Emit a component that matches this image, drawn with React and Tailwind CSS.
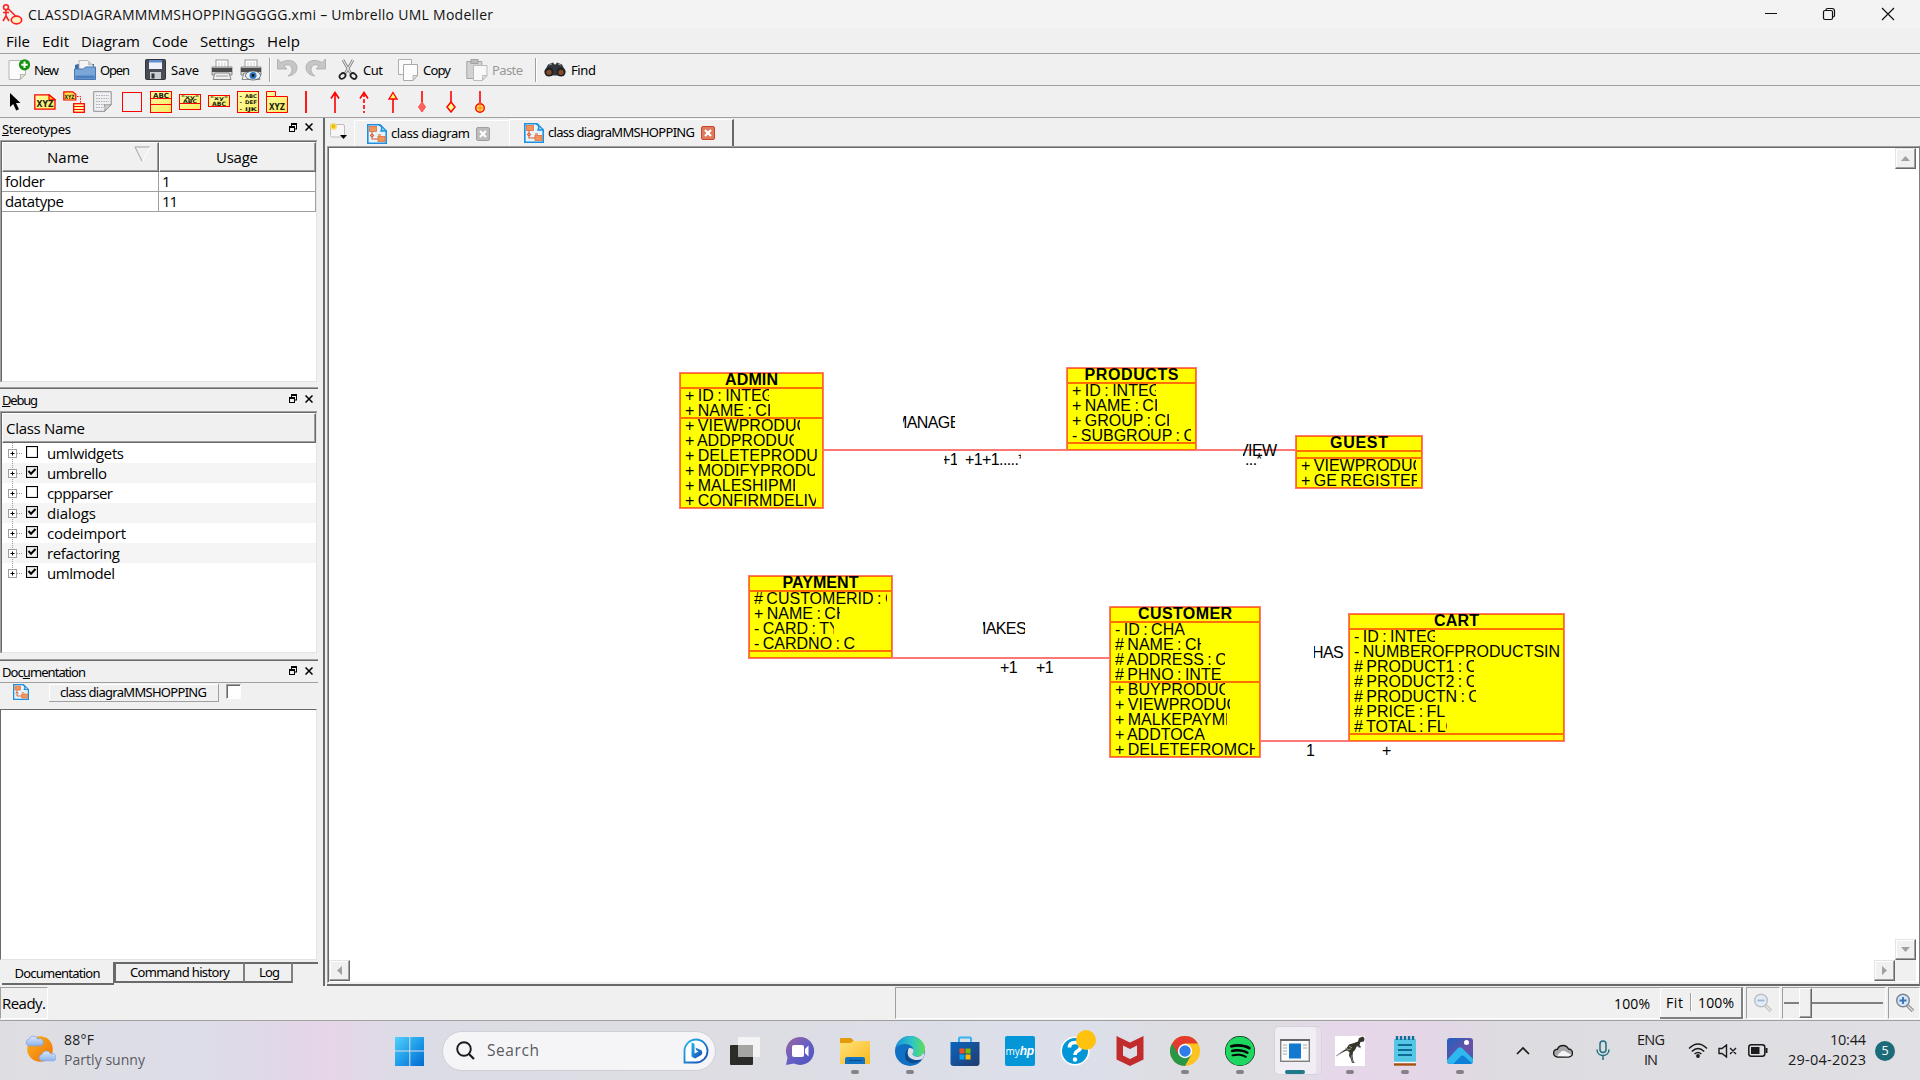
import React, { useLayoutEffect, useRef } from "react";
import { FaSpotify } from "react-icons/fa";

/* Text run spread evenly over a fixed width. */
function Fit({ w, className = "", children }) {
  const ref = useRef(null);
  useLayoutEffect(() => {
    const el = ref.current;
    el.style.letterSpacing = "0px";
    const n = el.textContent.length;
    const natural = el.getBoundingClientRect().width;
    if (n > 1) el.style.letterSpacing = (w - natural) / (n - 1) + "px";
  }, [w]);
  return (
    <span className={"block shrink-0 whitespace-nowrap " + className} style={{ width: w }}>
      <span ref={ref} className="inline-block whitespace-pre">{children}</span>
    </span>
  );
}

const Svg = ({ w, h, vb, className = "", children }) => (
  <svg width={w} height={h} viewBox={vb || `0 0 ${w} ${h}`} className={"block shrink-0 " + className} fill="none">{children}</svg>
);

/* ---------- title bar ---------- */
const AppIcon = () => (
  <Svg w={21} h={21}>
    <circle cx="4" cy="3.2" r="2.4" stroke="#f22" strokeWidth="1.6" />
    <path d="M4 6v6M1 8.5h6M4 12l-3 5M4 12l3 5M6 4.5l8 8" stroke="#f22" strokeWidth="1.6" />
    <ellipse cx="14.5" cy="16" rx="5.2" ry="3.8" fill="#fdf3c0" stroke="#f22" strokeWidth="1.7" />
  </Svg>
);

function TitleBar() {
  return (
    <div className="flex h-[28px] items-center bg-[#f3f3f3] pl-[2px]">
      <AppIcon />
      <Fit w={465} className="ml-[5px] text-[14px] text-[#111]">CLASSDIAGRAMMMMSHOPPINGGGGG.xmi – Umbrello UML Modeller</Fit>
      <div className="ml-auto flex items-center pr-[25px]">
        <Svg w={14} h={14} className="mr-[44px]"><path d="M1 6.500h12" stroke="#111" /></Svg>
        <Svg w={14} h={14} className="mr-[45px]">
          <rect x="1.500" y="3.500" width="9" height="9" rx="1.500" stroke="#111" strokeWidth="1.200" />
          <path d="M4 3.200C4 2 4.600 1.500 5.500 1.500H10c1.700 0 2.500.8 2.500 2.500v4.500c0 1-.5 1.500-1.600 1.500" stroke="#111" strokeWidth="1.200" />
        </Svg>
        <Svg w={14} h={14}><path d="M1 1l12 12M13 1L1 13" stroke="#111" strokeWidth="1.200" /></Svg>
      </div>
    </div>
  );
}

function MenuBar() {
  const items = [["File", 24, 6], ["Edit", 27, 12], ["Diagram", 59, 12], ["Code", 36, 12], ["Settings", 55, 12], ["Help", 33, 12]];
  return (
    <div className="flex h-[26px] items-center border-b border-[#a0a0a0]">
      {items.map(([t, w, m]) => (
        <div key={t} className="flex" style={{ marginLeft: m }}><Fit w={w} className="text-[15px] leading-[20px]">{t}</Fit></div>
      ))}
    </div>
  );
}

/* ---------- main toolbar ---------- */
const NewIcon = () => (
  <Svg w={22} h={22}>
    <path d="M1 1.500h16.500v14l-5.500 5H1z" fill="#fbfbfb" stroke="#b5b5b5" />
    <path d="M17.500 15.500l-5.500 5q1-2.500 .2-5z" fill="#dcecc8" stroke="#aaa" strokeWidth=".8" />
    <circle cx="16.500" cy="5.800" r="5.600" fill="#15930f" />
    <path d="M16.500 2.600v6.400M13.300 5.800h6.400" stroke="#fff" strokeWidth="2" />
  </Svg>
);
const OpenIcon = () => (
  <Svg w={22} h={22}>
    <path d="M1 10V6l3-1h16v8z" fill="#3c6aa5" />
    <path d="M5 12V1.500h9l5 5V12z" fill="#f4f4f6" stroke="#aaa" strokeWidth=".8" />
    <path d="M14 1.500l5 5h-5z" fill="#c8c8cc" />
    <path d="M.5 10h9l2-2h10v12.500H.5z" fill="#7ba6d8" stroke="#4878b4" />
    <path d="M1.500 18h19" stroke="#4d80c0" strokeWidth="3" />
  </Svg>
);
const SaveIcon = () => (
  <Svg w={21} h={21}>
    <rect x=".5" y=".5" width="20" height="20" rx="1" fill="#4a4c55" stroke="#33343b" />
    <rect x="4" y="1" width="13" height="9" fill="#eef2f8" />
    <rect x="4" y="1" width="13" height="2.500" fill="#5f8fd0" />
    <rect x="5" y="13" width="11" height="7" fill="#c9ccd2" />
    <rect x="6.500" y="14.500" width="3" height="5" fill="#34363c" />
  </Svg>
);
const Printer = ({ eye }) => (
  <Svg w={22} h={22}>
    <rect x="5" y="1" width="12" height="8" fill="#fff" stroke="#999" />
    <path d="M8 3v5M11 3v5M14 3v5" stroke="#ccc" />
    <path d="M1 8h20v8H1z" fill="#d0d0d0" stroke="#888" />
    <path d="M1 9h20v4H1z" fill="#4c4c4c" />
    <path d="M4 14h14l2 6.500H2z" fill="#eee" stroke="#888" />
    <path d="M5 17h12" stroke="#999" />
    {eye && <g><ellipse cx="13" cy="16.500" rx="7.500" ry="4.500" fill="#e8f2fb" stroke="#555" strokeWidth=".8" /><circle cx="13" cy="16.500" r="3.500" fill="#2f78c0" /><circle cx="13" cy="16.500" r="1.400" fill="#111" /></g>}
  </Svg>
);
const Undo = ({ flip }) => (
  <Svg w={22} h={20} className="mb-[3px]">
    <g transform={flip ? "translate(22 0) scale(-1 1)" : undefined}>
      <path d="M1.500 1v10h9.500l-3.200-3.200C12 5.500 16 7.500 16 11.500c0 3-2 5-4 6.500 5-.5 9-3.500 9-8.500C21 2.500 12 .5 5 4.500z" fill="#c6c6c6" stroke="#a9a9a9" strokeWidth=".8" />
    </g>
  </Svg>
);
const CutIcon = () => (
  <Svg w={20} h={21}>
    <path d="M5 1l7.500 13M15 1L7.500 14" stroke="#777" strokeWidth="2.600" />
    <path d="M5 1l7.500 13M15 1L7.500 14" stroke="#e4e4e4" strokeWidth="1.200" />
    <ellipse cx="4.500" cy="17" rx="3.200" ry="2.500" stroke="#222" strokeWidth="1.800" transform="rotate(-40 4.500 17)" />
    <ellipse cx="15.500" cy="17" rx="3.200" ry="2.500" stroke="#222" strokeWidth="1.800" transform="rotate(40 15.500 17)" />
  </Svg>
);
const CopyIcon = () => (
  <Svg w={20} h={22}>
    <path d="M.5.5h13v15H.5z" fill="#fafafa" stroke="#b0b0b0" />
    <path d="M5.500 5.500h14v11l-4.500 5H5.500z" fill="#fcfcfc" stroke="#a8a8a8" />
    <path d="M19.500 16.500l-4.500 5v-5z" fill="#ddd" stroke="#a8a8a8" strokeWidth=".8" />
  </Svg>
);
const PasteIcon = () => (
  <Svg w={22} h={22}>
    <path d="M.8 2.500h15v17H.8z" fill="#d2d2d2" stroke="#a5a5a5" />
    <rect x="5" y=".5" width="7" height="4" fill="#bbb" stroke="#999" strokeWidth=".8" />
    <path d="M7.500 6.500h13.500v10l-4.500 5h-9z" fill="#f8f8f8" stroke="#bbb" />
    <path d="M21 16.500l-4.500 5v-5z" fill="#ddd" stroke="#b5b5b5" strokeWidth=".8" />
  </Svg>
);
const FindIcon = () => (
  <Svg w={22} h={15}>
    <path d="M4 2.500l5-2 1.500 2h1l1.500-2 5 2 3.500 7-6 4h-9l-6-4z" fill="#33363a" />
    <circle cx="5" cy="10" r="4.600" fill="#1f2225" /><circle cx="17" cy="10" r="4.600" fill="#1f2225" />
    <circle cx="5" cy="10.300" r="2.600" fill="#8a4b28" /><circle cx="17" cy="10.300" r="2.600" fill="#8a4b28" />
    <path d="M5 3l3-1M14 2l3 1" stroke="#8d949b" />
  </Svg>
);
const Sep = () => <div className="h-[24px] w-[2px] shrink-0 border-l border-[#a0a0a0] bg-white" />;
const Label = ({ w, children, dim }) => (
  <Fit w={w} className={"pt-[2px] font-['Noto_Sans'] text-[13px] " + (dim ? "text-[#999]" : "")}>{children}</Fit>
);

function MainToolbar() {
  return (
    <div className="flex h-[32px] items-center border-b border-[#a0a0a0] pl-[8px]">
      <div className="flex w-[66px] items-center gap-[4px]"><NewIcon /><Label w={25}>New</Label></div>
      <div className="flex w-[71px] items-center gap-[4px]"><OpenIcon /><Label w={30}>Open</Label></div>
      <div className="flex w-[66px] items-center gap-[5px]"><SaveIcon /><Label w={28}>Save</Label></div>
      <div className="flex w-[58px] items-center gap-[7px]"><Printer /><Printer eye /></div>
      <Sep />
      <div className="ml-[5px] flex w-[62px] items-center gap-[7px]"><Undo /><Undo flip /></div>
      <div className="flex w-[60px] items-center gap-[5px]"><CutIcon /><Label w={20}>Cut</Label></div>
      <div className="flex w-[68px] items-center gap-[5px]"><CopyIcon /><Label w={28}>Copy</Label></div>
      <div className="flex w-[69px] items-center gap-[4px]"><PasteIcon /><Label w={31} dim>Paste</Label></div>
      <Sep />
      <div className="ml-[7px] flex items-center gap-[5px]"><FindIcon /><Label w={25}>Find</Label></div>
    </div>
  );
}

/* ---------- drawing toolbar ---------- */
const Glyph = ({ x, y, s = 8, children, w }) => (
  <text x={x} y={y} fontSize={s} fontFamily="DejaVu Sans" fontWeight="700" fill="#221" textLength={w} lengthAdjust="spacingAndGlyphs">{children}</text>
);
const Grad = () => (
  <defs><linearGradient id="yl" x1="0" y1="0" x2="1" y2="1"><stop offset="0" stopColor="#ffffa8" /><stop offset="1" stopColor="#f6ea5c" /></linearGradient></defs>
);
const DrawTools = [
  <Svg w={13} h={19}><path d="M1 1v14l3.200-3 3 6.500 2.800-1.300-3-6.200h4.500z" fill="#000" /></Svg>,
  <Svg w={22} h={16}><Grad /><path d="M.8.8H15l6 5v9.400H.8z" fill="url(#yl)" stroke="red" strokeWidth="1.300" /><path d="M15 .8v5h6z" fill="#fc0" stroke="red" strokeWidth="1.200" /><Glyph x="2.500" y="13" w="17">XYZ</Glyph></Svg>,
  <Svg w={22} h={22}><path d="M.8.8h9l3 2.500V9h-12z" fill="#ffe24a" stroke="red" strokeWidth="1.200" /><Glyph x="1.500" y="8" s={6} w="10">XYZ</Glyph><path d="M14 5.500h3.500V12" stroke="red" strokeDasharray="1.500 1.200" /><rect x="10.700" y="12.700" width="10.600" height="8.600" fill="#ffffa0" stroke="red" strokeWidth="1.300" /><path d="M10.700 15.500h10.600M10.700 18.500h10.600" stroke="red" /></Svg>,
  <Svg w={19} h={21}><path d="M.7.7h17.500v13l-6.500 6.600H.7z" fill="#f0f0f1" stroke="#8f8f94" /><path d="M3 4.500h13M3 7.500h13M3 10.500h13M3 13.500h9M3 16.500h8" stroke="#a9adba" strokeDasharray="1.500 1" /><path d="M18.200 13.700l-6.500 6.600q1-4-.5-6.500z" fill="#cfcfd2" stroke="#888" strokeWidth=".8" /></Svg>,
  <Svg w={20} h={20}><rect x=".5" y=".5" width="19" height="19" stroke="red" strokeWidth="1" /></Svg>,
  <Svg w={22} h={22}><Grad /><rect x=".5" y=".5" width="21" height="21" fill="url(#yl)" stroke="red" /><path d="M1 7.500h20M1 13.500h20" stroke="red" /><Glyph x="3" y="6.700" s={7} w="16">ABC</Glyph></Svg>,
  <Svg w={22} h={16}><Grad /><rect x=".5" y=".5" width="21" height="15" fill="url(#yl)" stroke="red" /><path d="M1 9.500h20" stroke="red" /><Glyph x="2" y="5" s={5} w="18">"xy"</Glyph><Glyph x="4" y="8.800" s={5} w="14">ABC</Glyph></Svg>,
  <Svg w={22} h={12} className="-mt-[1px]"><Grad /><rect x=".5" y=".5" width="21" height="11" fill="url(#yl)" stroke="red" /><Glyph x="2" y="5" s={5} w="18">"xy"</Glyph><Glyph x="4" y="10.500" s={6} w="14">ABC</Glyph></Svg>,
  <Svg w={22} h={22}><Grad /><rect x=".5" y=".5" width="21" height="21" fill="url(#yl)" stroke="red" /><Glyph x="2.500" y="6.500" s={5} w="2.500">-</Glyph><Glyph x="8" y="6.500" s={5} w="12">ABC</Glyph><Glyph x="2.500" y="13" s={5} w="2.500">-</Glyph><Glyph x="8" y="13" s={5} w="12">DEF</Glyph><Glyph x="2.500" y="19.500" s={5} w="2.500">-</Glyph><Glyph x="8" y="19.500" s={5} w="12">IJK</Glyph></Svg>,
  <Svg w={22} h={22}><Grad /><path d="M.5.500h9v5H21.500v16H.5z" fill="url(#yl)" stroke="red" /><path d="M.5 5.500h9" stroke="red" /><Glyph x="3" y="18.500" w="16">XYZ</Glyph></Svg>,
  <Svg w={12} h={22}><path d="M6 0v22" stroke="red" strokeWidth="1.800" /></Svg>,
  <Svg w={12} h={22}><path d="M6 1v21M2 7.500L6 1.500l4 6" stroke="red" strokeWidth="1.600" /></Svg>,
  <Svg w={12} h={22}><path d="M2 7.500L6 1.500l4 6" stroke="red" strokeWidth="1.600" /><path d="M6 2v20" stroke="red" strokeWidth="1.600" strokeDasharray="4 2" /></Svg>,
  <Svg w={12} h={22}><path d="M6 8v14" stroke="red" strokeWidth="1.600" /><path d="M6 1.500l4 6.500H2z" fill="#ffff60" stroke="red" strokeWidth="1.300" /></Svg>,
  <Svg w={12} h={22}><path d="M6 0v11" stroke="red" strokeWidth="1.600" /><path d="M6 11l3.500 5L6 21l-3.500-5z" fill="#ff6060" stroke="#ff4d4d" /></Svg>,
  <Svg w={12} h={22}><path d="M6 0v11" stroke="red" strokeWidth="1.600" /><path d="M6 11l4 5-4 5-4-5z" fill="#ffff90" stroke="red" strokeWidth="1.500" /></Svg>,
  <Svg w={12} h={22}><path d="M6 0v12" stroke="red" strokeWidth="1.600" /><circle cx="6" cy="17" r="4.300" fill="#ffd94a" stroke="red" strokeWidth="1.400" /><path d="M6 12v9M1.500 17h9" stroke="#ff7a1a" strokeWidth=".9" /></Svg>,
];
function DrawToolbar() {
  return (
    <div className="flex h-[32px] items-center border-b border-[#a0a0a0] pl-[1px]">
      {DrawTools.map((icon, i) => (
        <div key={i} className="flex w-[29px] shrink-0 justify-center">{icon}</div>
      ))}
    </div>
  );
}

/* ---------- docks ---------- */
const DockButtons = () => (
  <div className="ml-auto mb-[4px] flex items-center gap-[8px] pr-[5px]">
    <Svg w={8} h={9}><path d="M2.500 0v4M7.500 0v6M5 6h3" stroke="#000" /><path d="M2 1h6" stroke="#000" strokeWidth="2" /><rect x=".5" y="3.500" width="5" height="5" fill="#f0f0f0" stroke="#000" /><path d="M0 4h6" stroke="#000" strokeWidth="2" /></Svg>
    <Svg w={8} h={8}><path d="M.5.5l7 7M7.500.5l-7 7" stroke="#000" strokeWidth="1.500" /></Svg>
  </div>
);
const DockTitle = ({ w, className, children }) => (
  <div className={"flex items-center pl-[2px] " + className}>
    <Fit w={w} className="pt-[1px] font-['Noto_Sans'] text-[13px]">{children}</Fit>
    <DockButtons />
  </div>
);
const Sunken = ({ className = "", children }) => (
  <div className={"mr-[1px] flex flex-col border-t border-l border-[#a0a0a0] " + className}>
    <div className="flex min-h-0 flex-1 flex-col border border-t-[#696969] border-r-[#e3e3e3] border-b-[#e3e3e3] border-l-[#696969] bg-white">{children}</div>
  </div>
);
const Divider = () => <div className="h-[2px] shrink-0 border-t border-[#a0a0a0] bg-[#696969]" />;
const headCell = "border-t border-l border-t-white border-l-white border-r border-b border-r-[#696969] border-b-[#696969] bg-[#f0f0f0] shadow-[inset_-1px_-1px_0_#a0a0a0]";

function Stereotypes() {
  return (
    <>
      <DockTitle w={69} className="h-[22px]"><u>S</u>tereotypes</DockTitle>
      <Sunken className="h-[242px]">
        <div className="flex h-[30px]">
          <div className={"flex w-[157px] items-center pl-[44px] " + headCell}>
            <Fit w={42} className="text-[15px]">Name</Fit>
            <Svg w={17} h={17} className="mb-[5px] ml-[45px]"><path d="M16 1H1l7.500 15" stroke="#a0a0a0" /><path d="M16 1L8.500 16" stroke="#fff" /></Svg>
          </div>
          <div className={"flex flex-1 items-center justify-center pr-px " + headCell}><Fit w={42} className="text-[15px]">Usage</Fit></div>
        </div>
        {[["folder", 40, "1", 7], ["datatype", 59, "11", 16]].map(([a, w, b, v]) => (
          <div key={a} className="flex h-[20px] border-b border-[#a0a0a0] text-[15px] leading-[19px]">
            <div className="w-[157px] border-r border-[#a0a0a0] pl-[3px]"><Fit w={w}>{a}</Fit></div>
            <div className="flex-1 border-r border-[#a0a0a0] pl-[3px]"><Fit w={v}>{b}</Fit></div>
          </div>
        ))}
      </Sunken>
    </>
  );
}

const Check = ({ on }) => (
  <Svg w={12} h={12}>
    <rect x=".5" y=".5" width="11" height="11" fill={on ? "#f0f0f0" : "#fff"} stroke="#000" strokeWidth="1.200" />
    {on && <path d="M2.500 5l2.500 2.800L9.500 3" stroke="#000" strokeWidth="2" />}
  </Svg>
);
function DebugDock() {
  const rows = [["umlwidgets", 0, 77], ["umbrello", 1, 60], ["cppparser", 0, 66], ["dialogs", 1, 49], ["codeimport", 1, 79], ["refactoring", 1, 73], ["umlmodel", 1, 68]];
  return (
    <>
      <DockTitle w={36} className="h-[22px] pt-[1px]"><u>D</u>ebug</DockTitle>
      <Sunken className="h-[242px]">
        <div className={"flex h-[30px] items-center pl-[3px] " + headCell}><Fit w={79} className="text-[15px]">Class Name</Fit></div>
        {rows.map(([t, on, w], i) => (
          <div key={t} className={"flex h-[20px] items-center pl-[6px] " + (i % 2 ? "bg-[#f5f5f5]" : "")}>
            <Svg w={15} h={20}>
              <path d={i === 6 ? "M4.500 0v10" : "M4.500 0v20"} stroke="#999" strokeDasharray="1 1" />
              <path d="M9 10.500h6" stroke="#999" strokeDasharray="1 1" />
              <rect x=".5" y="6.500" width="8" height="8" fill="#fff" stroke="#a0a0a0" />
              <path d="M2.500 10.500h4M4.500 8.500v4" stroke="#000" />
            </Svg>
            <div className="mb-[3px] ml-[3px]"><Check on={on} /></div>
            <Fit w={w} className="ml-[9px] text-[15px] leading-[18px]">{t}</Fit>
          </div>
        ))}
      </Sunken>
    </>
  );
}

const DiagramIcon = ({ s = 20 }) => (
  <Svg w={s} h={s} vb="0 0 20 20">
    <path d="M.8.8H13l6.200 6v12.400H.8z" fill="#e4f3fc" stroke="#1e8fe0" strokeWidth="1.600" />
    <path d="M12 1q4 1 2 6h5" fill="#8fd0f5" stroke="#1e8fe0" strokeWidth="1.300" />
    <rect x="2.500" y="2.500" width="7" height="5" fill="#f2955c" stroke="#e07038" strokeWidth=".8" />
    <rect x="11" y="12.500" width="7" height="5" fill="#f2955c" stroke="#e07038" strokeWidth=".8" />
    <path d="M5 7.500v2.500M5 13v2h6M3.500 11.500L5 10l1.500 1.500L5 13z" stroke="#e05a2b" strokeWidth="1.100" />
    <path d="M11 11h3" stroke="#e9a27a" strokeWidth="2" />
  </Svg>
);

function DocumentationDock() {
  return (
    <>
      <DockTitle w={84} className="h-[22px] border-b border-[#a0a0a0] pt-[2px]">Doc<u>u</u>mentation</DockTitle>
      <div className="flex h-[26px] items-start pl-[13px] pt-[1px]">
        <DiagramIcon s={16} />
        <div className="ml-[20px] flex h-[18px] w-[170px] items-center justify-center border-r border-b border-[#a0a0a0] shadow-[inset_1px_1px_0_#fff]">
          <Fit w={147} className="font-['Noto_Sans'] text-[13px]">class diagraMMSHOPPING</Fit>
        </div>
        <div className="ml-[7px] h-[15px] w-[15px] border border-t-[#a0a0a0] border-r-white border-b-white border-l-[#a0a0a0] bg-white shadow-[inset_1px_1px_0_#696969]" />
      </div>
      <div className="mr-[1px] h-[251px] border border-t-[#696969] border-r-[#e3e3e3] border-b-[#e3e3e3] border-l-[#696969] bg-white" />
      <div className="mt-[2px] flex h-[24px] items-start font-['Noto_Sans'] text-[13px]">
        <div className="ml-[2px] flex h-[23px] w-[112px] items-center justify-center border-r border-b-2 border-[#696969] pt-[2px]"><Fit w={86}>Documentation</Fit></div>
        <div className="flex h-[21px] w-[131px] items-center justify-center border-2 border-[#696969] border-r-[#808080] bg-[#f0f0f0] pl-px"><Fit w={100}>Command history</Fit></div>
        <div className="flex h-[21px] w-[48px] items-center justify-center border-2 border-l-0 border-[#696969] border-r-[#808080] pl-[3px]"><Fit w={21}>Log</Fit></div>
        <div className="h-[2px] flex-1 bg-[#696969]" />
      </div>
    </>
  );
}

/* ---------- canvas ---------- */
const CLASSES = [
  { name: "ADMIN", hw: 53, x: 679, y: 372, w: 145, attrs: [["+ ID : INTEG", 84], ["+ NAME : CH", 85]], ops: [["+ VIEWPRODUC", 115], ["+ ADDPRODUC", 109], ["+ DELETEPRODU", 133], ["+ MODIFYPRODU", 130], ["+ MALESHIPME", 110], ["+ CONFIRMDELIV", 131]] },
  { name: "PRODUCTS", hw: 94, x: 1066, y: 367, w: 131, attrs: [["+ ID : INTEG", 84], ["+ NAME : CH", 85], ["+ GROUP : CH", 97], ["- SUBGROUP : C", 119]], ops: [] },
  { name: "GUEST", hw: 58, x: 1295, y: 435, w: 128, attrs: [], ops: [["+ VIEWPRODUC", 115], ["+ GE REGISTER", 116]] },
  { name: "PAYMENT", hw: 76, x: 748, y: 575, w: 145, attrs: [["# CUSTOMERID : C", 133], ["+ NAME : CH", 86], ["- CARD : TY", 80], ["- CARDNO : C", 102]], ops: [] },
  { name: "CUSTOMER", hw: 94, x: 1109, y: 606, w: 152, attrs: [["- ID : CHA", 70], ["# NAME : CH", 86], ["# ADDRESS : C", 110], ["# PHNO : INTE", 106]], ops: [["+ BUYPRODUC", 110], ["+ VIEWPRODUC", 115], ["+ MALKEPAYME", 112], ["+ ADDTOCA", 90], ["+ DELETEFROMCH", 140]] },
  { name: "CART", hw: 45, x: 1348, y: 613, w: 217, attrs: [["- ID : INTEG", 81], ["- NUMBEROFPRODUCTSIN", 206], ["# PRODUCT1 : C", 120], ["# PRODUCT2 : C", 120], ["# PRODUCTN : C", 122], ["# PRICE : FL", 92], ["# TOTAL : FLO", 93]], ops: [] },
];
const Row = ({ t, w }) => (
  <div className="h-[15px] overflow-hidden whitespace-pre text-[16px] leading-[15px] [word-spacing:-1px]" style={{ width: w }}>{t}</div>
);
function UmlClass({ c }) {
  return (
    <div className="absolute border border-[#ff7878]" style={{ left: c.x - 329, top: c.y - 148, width: c.w }}>
      <div className="border border-[#ff7000] bg-[#ffff00]">
        <div className="flex h-[13px] items-center justify-center"><Fit w={c.hw} className="-mt-[2px] text-[16px] font-bold leading-[15px]">{c.name}</Fit></div>
        {[c.attrs, c.ops].map((rows, i) => (
          <div key={i} className="border-t-2 border-[#ff7000] pl-[4px]" style={{ height: rows.length ? rows.length * 15 : 7 }}>
            <div className="-mt-px">{rows.map(([t, w]) => <Row key={t} t={t} w={w} />)}</div>
          </div>
        ))}
      </div>
    </div>
  );
}
/* Free text; shift moves the run left inside its clip window. */
const Note = ({ x, y, w, shift = 0, children }) => (
  <div className="absolute h-[16px] overflow-hidden whitespace-pre text-[16px] leading-[16px] tracking-[-0.6px]" style={{ left: x - 329, top: y - 8 - 148, width: w }}>
    <span className="inline-block" style={{ marginLeft: -shift }}>{children}</span>
  </div>
);
const Wire = ({ x, y, w }) => <div className="absolute h-[2px] bg-[#ff7878]" style={{ left: x - 329, top: y - 148, width: w }} />;

const ScrollBtn = ({ d, className }) => (
  <div className={"absolute flex h-[21px] w-[21px] items-center justify-center border border-t-[#e3e3e3] border-r-[#696969] border-b-[#696969] border-l-[#e3e3e3] bg-[#f0f0f0] shadow-[inset_-1px_-1px_0_#a0a0a0,inset_1px_1px_0_#fff] " + className}>
    <Svg w={9} h={9} className="mb-px mr-px"><path d={d} fill="#a0a0a0" /></Svg>
  </div>
);

function Canvas() {
  return (
    <div className="relative min-h-0 flex-1 overflow-hidden bg-white font-['Liberation_Sans'] text-black">
      <Wire x={824} y={449} w={242} />
      <Wire x={1197} y={449} w={98} />
      <Wire x={893} y={657} w={216} />
      <Wire x={1261} y={740} w={87} />
      {CLASSES.map((c) => <UmlClass key={c.name} c={c} />)}
      <Note x={903} y={423} w={52} shift={9}>MANAGE</Note>
      <Note x={944} y={460} w={13} shift={3}>+1</Note>
      <Note x={965} y={460} w={56}>+1+1.....*</Note>
      <Note x={1243} y={451} w={35} shift={5}>VIEW</Note>
      <Note x={1256} y={460} w={8}>*</Note>
      <Note x={1245} y={460} w={12}>...</Note>
      <Note x={983} y={629} w={42} shift={10}>MAKES</Note>
      <Note x={1000} y={668} w={20}>+1</Note>
      <Note x={1036} y={668} w={20}>+1</Note>
      <Note x={1314} y={653} w={32} shift={2}>HAS</Note>
      <Note x={1306} y={751} w={12}>1</Note>
      <Note x={1382} y={751} w={12}>+</Note>
      <ScrollBtn d="M0 7l4.500-5L9 7z" className="right-[3px] top-0" />
      <ScrollBtn d="M0 2l4.500 5L9 2z" className="bottom-[22px] right-[3px]" />
      <ScrollBtn d="M2 0v9l5-4.500z" className="bottom-[1px] right-[24px]" />
      <ScrollBtn d="M7 0v9L2 4.500z" className="bottom-[1px] left-0" />
      <div className="absolute bottom-[1px] right-[3px] h-[21px] w-[21px] bg-[#f0f0f0]" />
    </div>
  );
}

const CloseBtn = ({ on }) => (
  <Svg w={14} h={14}>
    <rect x=".5" y=".5" width="13" height="13" rx="1.500" fill={on ? "#e07a5c" : "#bcbcbc"} stroke={on ? "#c8452a" : "#a0a0a0"} />
    <path d="M4 4l6 6M10 4l-6 6" stroke="#fff" strokeWidth="2.200" />
  </Svg>
);
function MainArea() {
  return (
    <div className="flex min-w-0 flex-1 flex-col border-l-2 border-[#696969]">
      <div className="flex h-[28px] items-end pl-[4px]">
        <Svg w={19} h={18} className="mb-[6px]">
          <rect x="1.500" y="2.500" width="14" height="12.500" rx="1.500" fill="#f7f7f7" stroke="#bdbdbd" />
          <circle cx="4.500" cy="4.500" r="3.600" fill="#f6d548" opacity=".75" /><circle cx="4.500" cy="4.500" r="1.800" fill="#f0b800" />
          <path d="M11 13h7l-3.500 4z" fill="#000" />
        </Svg>
        <div className="ml-[6px] flex h-[26px] w-[155px] items-center rounded-tl-[2px] border-t border-l border-white pl-[12px]">
          <DiagramIcon />
          <Fit w={79} className="ml-[4px] pt-px font-['Noto_Sans'] text-[13px]">class diagram</Fit>
          <div className="ml-[6px]"><CloseBtn /></div>
        </div>
        <div className="flex h-[27px] w-[225px] items-center border-t border-r-2 border-l border-t-white border-r-[#696969] border-l-white pl-[14px] pb-px">
          <DiagramIcon />
          <Fit w={147} className="ml-[4px] pt-px font-['Noto_Sans'] text-[13px]">class diagraMMSHOPPING</Fit>
          <div className="ml-[6px]"><CloseBtn on /></div>
        </div>
      </div>
      <div className="ml-[2px] flex min-h-0 flex-1 flex-col border-r border-b-2 border-r-[#808080] border-b-[#696969]">
        <div className="flex min-h-0 flex-1 flex-col border-b-2 border-t border-l border-t-[#a0a0a0] border-l-[#a0a0a0] border-b-[#f0f0f0]">
          <div className="flex min-h-0 flex-1 flex-col border-t border-l border-[#696969]">
            <Canvas />
          </div>
        </div>
      </div>
    </div>
  );
}

/* ---------- status bar ---------- */
const well = "border border-t-[#a0a0a0] border-r-white border-b-white border-l-[#a0a0a0]";
const Magnifier = ({ plus }) => (
  <Svg w={20} h={20} className={plus ? "" : "opacity-45"}>
    <path d="M12 12l6 6" stroke="#8a8a8a" strokeWidth="3.400" /><path d="M12.500 12.500l5.500 5.500" stroke="#ddd" strokeWidth="1.400" />
    <circle cx="8" cy="7.500" r="6.300" fill="#d4e6fa" stroke="#7c8794" strokeWidth="1.500" />
    <path d={plus ? "M4.500 7.500h7M8 4v7" : "M4.500 7.500h7"} stroke="#3a6fb8" strokeWidth="1.800" />
  </Svg>
);
function StatusBar() {
  return (
    <div className="flex h-[35px] items-start border-b border-[#a0a0a0] pt-[1px] text-[15px]">
      <div className={"flex h-[32px] w-[48px] items-center pl-[1px] " + well}><Fit w={44}>Ready.</Fit></div>
      <div className={"ml-[847px] flex h-[32px] w-[849px] items-center " + well}>
        <Fit w={36} className="ml-auto text-[14px]">100%</Fit>
        <div className="ml-[10px] flex h-[31px] w-[83px] items-center border-r-2 border-b-2 border-[#808080] pl-[6px] text-[14px] shadow-[inset_1px_1px_0_#fff]">
          <Fit w={17}>Fit</Fit>
          <div className="ml-[7px] h-[18px] w-[2px] border-l border-[#a0a0a0] bg-white" />
          <Fit w={36} className="ml-[6px]">100%</Fit>
        </div>
      </div>
      <div className={"ml-[2px] flex h-[32px] w-[34px] items-center justify-center " + well}><Magnifier /></div>
      <div className={"ml-[2px] flex h-[32px] w-[104px] items-center " + well}>
        <div className="ml-[1px] h-[2px] w-[15px] bg-[#808080]" />
        <div className="h-[30px] w-[13px] border border-t-white border-r-[#696969] border-b-[#696969] border-l-white bg-[#f0f0f0] shadow-[inset_-1px_-1px_0_#a0a0a0]" />
        <div className="h-[2px] w-[71px] bg-[#808080]" />
      </div>
      <div className={"ml-[2px] flex h-[32px] flex-1 items-center pl-[6px] " + well}><Magnifier plus /></div>
    </div>
  );
}

/* ---------- taskbar ---------- */
const cloudPath = "M3 9a3 3 0 0 1 .5-5.800A4 4 0 0 1 11 3a3 3 0 0 1 3 6z";
const Weather = () => (
  <Svg w={31} h={29}>
    <defs><linearGradient id="sun" x1="0" y1="0" x2="1" y2="1"><stop stopColor="#f8b420" /><stop offset="1" stopColor="#f07008" /></linearGradient><linearGradient id="cl" x1="0" y1="0" x2="0" y2="1"><stop stopColor="#dbe8fc" /><stop offset="1" stopColor="#8db2ee" /></linearGradient></defs>
    <circle cx="15" cy="15" r="12.800" fill="url(#sun)" />
    <g fill="url(#cl)" stroke="#7fa0dc" strokeWidth=".6"><path transform="translate(0 1.500) scale(1.150)" d={cloudPath} /><path transform="translate(13 16.500) scale(1.150)" d={cloudPath} /></g>
  </Svg>
);
const Windows = () => (
  <Svg w={30} h={30}>
    <defs><linearGradient id="win" gradientUnits="userSpaceOnUse" x1="0" y1="0" x2="30" y2="30"><stop stopColor="#55d3fc" /><stop offset=".5" stopColor="#1f9eea" /><stop offset="1" stopColor="#0068d0" /></linearGradient></defs>
    <path d="M0 1h14.300v13.500H0zM15.300 1H29v13.500H15.300zM0 15.500h14.300V30H0zM15.300 15.500H29V30H15.300z" fill="url(#win)" />
  </Svg>
);
const Bing = () => (
  <Svg w={26} h={26}>
    <defs><linearGradient id="bg" x1="0" y1="0" x2="1" y2="1"><stop stopColor="#23b8f0" /><stop offset="1" stopColor="#1649b0" /></linearGradient></defs>
    <path d="M1.500 24.500V13A11.500 11.500 0 1 1 13 24.500z" fill="#fff" stroke="url(#bg)" strokeWidth="1.800" />
    <path d="M8.500 4.500l3 1.300v9.700l4-2-2-1-1.200-3 6.200 2.700c1.500 2.500.5 4.300-1 5.300l-5.500 3-3.500-2z" fill="url(#bg)" />
  </Svg>
);
const TaskIcons = [
  [<Svg w={30} h={28}><rect x="0" y="8" width="23" height="20" rx="1" fill="#2b2b29" /><rect x="8" y="0" width="22" height="20" rx="1" fill="#f4f4f4" /><path d="M8 8h15v12H8z" fill="#a5a5a3" /></Svg>],
  [<Svg w={30} h={30}><defs><linearGradient id="chat" x1="0" y1="0" x2="1" y2="1"><stop stopColor="#a1649c" /><stop offset=".5" stopColor="#6560c4" /><stop offset="1" stopColor="#4a52c0" /></linearGradient></defs><path d="M15 1a14 14 0 1 1-6 26.600L1 29l1.500-7.500A14 14 0 0 1 15 1z" fill="url(#chat)" /><rect x="7" y="9" width="12" height="12" rx="2" fill="#fff" /><path d="M20 13l3.500-3.500v11L20 17z" fill="#fff" /></Svg>],
  [<Svg w={30} h={28}><defs><linearGradient id="fo" x1="0" y1="0" x2="1" y2="1"><stop stopColor="#ffe17a" /><stop offset="1" stopColor="#fbba1c" /></linearGradient></defs><path d="M0 2q0-1 1-1h10l3 3v5H0z" fill="#e29c09" /><path d="M0 6h11l2-2h16q1 0 1 1v22H0z" fill="url(#fo)" /><path d="M5 27v-5q0-2 2-2h16q2 0 2 2v5z" fill="#1273c4" /><path d="M9 23.500h13" stroke="#0b4d91" strokeWidth="1.200" /></Svg>, 1],
  [<Svg w={30} h={30}><defs><linearGradient id="e1" x1="0" y1="0" x2="1" y2="0"><stop stopColor="#1993d8" /><stop offset=".55" stopColor="#2fc4c8" /><stop offset="1" stopColor="#5fe055" /></linearGradient></defs><circle cx="15" cy="15" r="15" fill="#1070c4" /><path d="M.5 12C2 5 8 0 15 0c9 0 15 6.500 15 13 0 4.500-3.500 7.500-8 7.500-3 0-5-1-5-2.500 0-1 1.500-1.500 1.500-4 0-3-3.500-6-8-6-5 0-9 2.500-10 4z" fill="url(#e1)" /><path d="M10 20c0 5 5 8 10 7 4-.8 6-2.500 8-5-5 3-14 2-15.500-4-.5-2.500.5-5 2.500-6-3 0-5 4-5 8z" fill="#0b4a92" /><path d="M14 12c3 0 5 1 4.500 3.500-.5 1.500-1.500 2-1 3 .8 2 5 3 8 1.500l4-3.500c0 3-1 5-2 6.500-5 2-13 1-14.500-4-.8-3 .2-6 1-7z" fill="#dddde5" /></Svg>, 1],
  [<Svg w={30} h={30}><defs><linearGradient id="st" x1="0" y1="0" x2="1" y2="1"><stop stopColor="#0a66c0" /><stop offset="1" stopColor="#243a6e" /></linearGradient></defs><path d="M9 7V2.500q0-1 1-1h10q1 0 1 1V7" stroke="#35b4ef" strokeWidth="2" /><path d="M.5 6h29v21q0 3-3 3h-23q-3 0-3-3z" fill="url(#st)" /><path d="M9.500 12.500h5v5h-5z" fill="#f25022" /><path d="M15.500 12.500h5v5h-5z" fill="#7fba00" /><path d="M9.500 18.500h5v5h-5z" fill="#00a4ef" /><path d="M15.500 18.500h5v5h-5z" fill="#ffb900" /></Svg>],
  [<div className="flex h-[30px] w-[30px] items-center justify-center rounded-[2px] bg-[#0496d6] text-white"><span className="text-[10px] leading-none">my</span><span className="font-['Liberation_Sans_Narrow','Liberation_Sans'] text-[12px] font-bold italic leading-none tracking-[-0.5px]">hp</span></div>],
  [<div className="relative h-[30px] w-[30px]"><Svg w={30} h={30}><circle cx="15" cy="15" r="13.800" fill="#0496d6" stroke="#fff" strokeWidth="1.600" /><path d="M9.500 11.500q0-5 5.500-5t5.500 4.500q0 2.500-3 4-2.500 1.500-2.500 4" stroke="#fff" strokeWidth="3.600" /><circle cx="15" cy="23.500" r="2.200" fill="#fff" /></Svg><div className="absolute -right-[6px] -top-[6px] h-[20px] w-[20px] rounded-full bg-[#ffc20e]" /></div>],
  [<Svg w={28} h={30}><path d="M.5 0L14 6.500 27.500 0v23.500L14 30 .5 23.500z" fill="#c01818" opacity=".9" /><path d="M7 9.500l7 3.500 7-3.500v10L14 23l-7-3.500z" fill="#dcdfe8" /></Svg>],
  [<Svg w={30} h={30}><circle cx="15" cy="15" r="15" fill="#fcc31e" /><path d="M2 7.500A15 15 0 0 0 15 30l6.500-11.500L15 15z" fill="#2a9648" /><path d="M15 7.500h13A15 15 0 0 0 2 7.500l6.500 11z" fill="#e33b2e" /><circle cx="15" cy="15" r="7.200" fill="#fff" /><circle cx="15" cy="15" r="5.700" fill="#2f7de8" /></Svg>, 1],
  [<div className="h-[30px] w-[30px] rounded-full bg-black p-[1px]"><FaSpotify size={30} color="#1ed760" className="-m-[1px] block" /></div>, 1],
  [<Svg w={30} h={23}><rect x=".7" y=".7" width="28.600" height="21.600" fill="#fafafa" stroke="#808080" strokeWidth="1.400" /><path d="M0 1h30" stroke="#666" strokeWidth="2" /><path d="M3 6h4M3 9h4M3 12h4M3 15h4M23 6h4M23 9h4" stroke="#aaa" /><rect x="9" y="4.500" width="12" height="15" fill="#1378d0" /></Svg>, 2],
  [<Svg w={30} h={30}><rect width="30" height="30" fill="#fff" /><path d="M1 20.500l6-5 4-2.500 3-4.500 5-1.500 4-1.500 1-3.500 4-1.500 1.500 2-.5 3-3.500.5-1 3 1.500 2-2 .5-2-1.500-2 4-2 2-.5 4 1 5.500 1.500 1.500h-3l-1.500-5-1.500-2 .5-4-3-1.500-5 2.500z" fill="#35352c" /><path d="M1 20l7-5M22 10l4 2M10 12l3 1M16 19l2 8" stroke="#9a7bb0" strokeWidth=".8" /><path d="M14 10l3 2M12 14l4-1" stroke="#b8c48a" strokeWidth=".8" /></Svg>, 1],
  [<Svg w={24} h={30}><rect x="1" y="3" width="22" height="24" rx="1" fill="#55c6e4" /><path d="M1 26.500h22" stroke="#f5f5f5" strokeWidth="1.500" /><path d="M1 28.500h22" stroke="#a8500f" strokeWidth="2.400" /><path d="M5 9h14M5 14h14M5 19h14" stroke="#0e6a96" strokeWidth="2" /><path d="M4 0v4M8 0v4M12 0v4M16 0v4M20 0v4" stroke="#0f6f99" strokeWidth="2.400" /></Svg>, 1],
  [<Svg w={26} h={26}><defs><linearGradient id="ph" x1="0" y1="0" x2="1" y2="1"><stop stopColor="#1e62c0" /><stop offset=".6" stopColor="#6d4fa4" /><stop offset="1" stopColor="#2968bb" /></linearGradient></defs><rect width="26" height="26" rx="3" fill="url(#ph)" /><path d="M0 22L11 10q2-1.500 4 0l11 11v2q0 3-3 3H3q-3 0-3-3z" fill="#2fb8f0" /><path d="M6 26l8-8q1.500-1 3 0l8 7-2 1z" fill="#0f80d8" /><circle cx="19.500" cy="4.500" r="2.500" fill="#fff" /></Svg>, 1],
];

function Taskbar() {
  return (
    <div className="flex h-[59px] items-center bg-[linear-gradient(90deg,#dedee2_0%,#dcdde8_10%,#e0d8e8_14%,#e6d5e8_17%,#dcdce6_21%,#dddde3_38%,#dcdfea_56%,#dedde2_62%,#dedde2_66%,#e6d8ea_70%,#e4d6e6_74%,#dddce0_79%,#e0dfe4_100%)] text-[#1b1b1b]">
      <div className="ml-[25px] -mt-[4px]"><Weather /></div>
      <div className="ml-[8px] -mt-[2px] flex w-[331px] flex-col text-[14px] leading-[20px]">
        <Fit w={30}>88°F</Fit>
        <Fit w={81} className="text-[#5a5a5e]">Partly sunny</Fit>
      </div>
      <Windows />
      <div className="ml-[17px] flex h-[40px] w-[274px] items-center rounded-full border border-[#cfcfd6] bg-[#f5f5f8] pl-[13px] pr-[6px]">
        <Svg w={19} h={19}><circle cx="8" cy="8" r="6.800" stroke="#1b1b1b" strokeWidth="1.900" /><path d="M13 13l5 5" stroke="#1b1b1b" strokeWidth="2.200" /></Svg>
        <Fit w={52} className="ml-[12px] text-[15.500px] text-[#5a5a5e]">Search</Fit>
        <div className="ml-auto"><Bing /></div>
      </div>
      <div className="ml-[1px] flex">
        {TaskIcons.map(([icon, st], i) => (
          <div key={i} className="flex h-[59px] w-[55px] justify-center pt-[5px]">
            <div className={"relative flex h-[49px] items-center justify-center " + (st === 2 ? "w-[48px] rounded-[5px] border border-[#d8d2de] bg-[#f1edf4] pr-[5px] shadow-[inset_-5px_0_0_#e9e0ee] translate-x-[3px]" : "w-[44px]")}>
              {icon}
              {st === 1 && <div className="absolute bottom-[1px] h-[4px] w-[8px] rounded-full bg-[#858287]" />}
              {st === 2 && <div className="absolute bottom-0 h-[4px] w-[20px] rounded-full bg-[#20798a]" />}
            </div>
          </div>
        ))}
      </div>
      <div className="ml-auto flex items-center pr-[25px] text-[14.500px] leading-[20px]">
        <Svg w={14} h={9} className="mr-[23px]"><path d="M1 8l6-6 6 6" stroke="#1b1b1b" strokeWidth="1.700" /></Svg>
        <Svg w={20} h={15} className="mr-[23px] mb-[1px]"><path d="M4.500 14a3.900 3.900 0 0 1 0-7.800 6 6 0 0 1 11-.2 4 4 0 0 1 0 8z" fill="#a9a9ab" stroke="#1b1b1b" strokeWidth="1.400" /><path d="M4 13.300q4-6 7-5.500l7.500 4-3 1.600z" fill="#f5f5f5" /></Svg>
        <Svg w={14} h={21} className="mr-[27px]"><rect x="4" y="1" width="6" height="11.500" rx="3" stroke="#1f6f80" strokeWidth="1.500" /><path d="M1 9.500c0 8 12 8 12 0M7 15.500V20" stroke="#1f6f80" strokeWidth="1.500" /></Svg>
        <div className="-mt-[2px] mr-[23px] flex w-[28px] flex-col items-center"><Fit w={28}>ENG</Fit><Fit w={14}>IN</Fit></div>
        <Svg w={20} h={15} className="mr-[10px]"><path d="M1 5.500q9-9 18 0M3.800 8.500q6.200-6 12.400 0M6.600 11q3.400-3 6.800 0" stroke="#1b1b1b" strokeWidth="1.500" /><circle cx="10" cy="13" r="1.900" fill="#1b1b1b" /></Svg>
        <Svg w={19} h={14} className="mr-[11px]"><path d="M1 4.500h3l4.500-3.500v12L4 9.500H1zM12 4l6 6M18 4l-6 6" stroke="#1b1b1b" strokeWidth="1.400" /></Svg>
        <Svg w={20} h={13} className="mr-[20px]"><rect x=".8" y=".8" width="16" height="11.400" rx="2.500" stroke="#1b1b1b" strokeWidth="1.500" /><rect x="3" y="3" width="8.500" height="7" fill="#1b1b1b" /><path d="M18.500 4v5" stroke="#1b1b1b" strokeWidth="2" /></Svg>
        <div className="-mt-[2px] mr-[9px] flex flex-col items-end"><Fit w={36}>10:44</Fit><Fit w={78}>29-04-2023</Fit></div>
        <div className="flex h-[20px] w-[20px] items-center justify-center rounded-full bg-[#1c6b7a] text-[12.500px] text-white">5</div>
      </div>
    </div>
  );
}

export default function App() {
  return (
    <div className="flex h-[1080px] w-[1920px] flex-col overflow-hidden bg-[#f0f0f0] font-['Open_Sans',sans-serif] text-black">
      <TitleBar />
      <MenuBar />
      <MainToolbar />
      <DrawToolbar />
      <div className="flex h-[868px]">
        <div className="mr-[5px] flex w-[318px] flex-col">
          <Stereotypes />
          <div className="h-[5px]" />
          <Divider />
          <DebugDock />
          <div className="h-[6px]" />
          <Divider />
          <DocumentationDock />
        </div>
        <MainArea />
      </div>
      <StatusBar />
      <Taskbar />
    </div>
  );
}
